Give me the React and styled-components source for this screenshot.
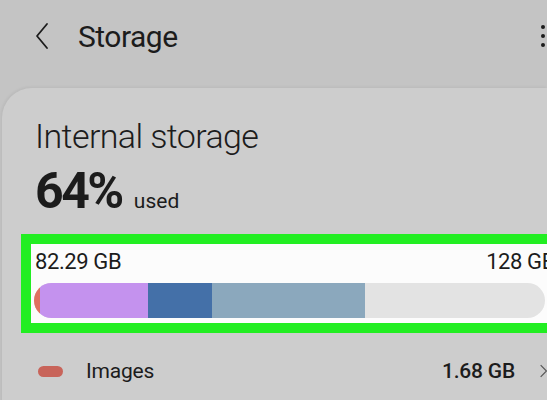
import React from "react";
import styled, { createGlobalStyle } from "styled-components";

const GlobalStyle = createGlobalStyle`
  html, body {
    margin: 0;
    padding: 0;
    background: #c4c4c4;
    overflow: hidden;
  }
  body {
    font-family: Roboto, "Liberation Sans", sans-serif;
    color: #1c1c1c;
  }
`;

const Screen = styled.div`
  width: 547px;
  height: 400px;
  overflow: hidden;
  background: #c4c4c4;
`;

const Header = styled.div`
  height: 88px;
  display: flex;
  align-items: flex-start;
  padding-top: 22px;
  box-sizing: border-box;
`;

const BackButton = styled.div`
  width: 44px;
  margin-left: 34px;
  display: flex;
`;

const Title = styled.h1`
  margin: 0;
  font-size: 30px;
  font-weight: 400;
  letter-spacing: -0.5px;
  line-height: 30px;
  flex: 1;
`;

const Kebab = styled.div`
  display: flex;
  flex-direction: column;
  gap: 5px;
  margin-right: 2px;
  margin-top: 3px;
  span {
    width: 4px;
    height: 4px;
    border-radius: 50%;
    background: #1c1c1c;
  }
`;

const Card = styled.div`
  margin-left: 2px;
  background: #cdcdcd;
  border-radius: 30px 0 0 0;
  box-shadow: -1px -1px 3px rgba(0, 0, 0, 0.06);
  height: 320px;
  padding-top: 29px;
  box-sizing: border-box;
`;

const CardTitle = styled.div`
  margin-left: 33px;
  font-size: 34px;
  font-weight: 300;
  letter-spacing: -0.6px;
  line-height: 38px;
`;

const Usage = styled.div`
  margin-left: 33px;
  margin-top: 11px;
  display: flex;
  align-items: baseline;
  gap: 12px;
`;

const Percent = styled.span`
  font-size: 50px;
  font-weight: 700;
  letter-spacing: -2.5px;
  line-height: 50px;
`;

const Used = styled.span`
  font-size: 21px;
  font-weight: 400;
`;

const Highlight = styled.div`
  margin-top: 18px;
  margin-left: 19px;
  width: 560px;
  border: 10px solid #22ee22;
  background: #fcfcfc;
  padding: 5px 0 5px 3px;
  box-sizing: border-box;
`;

const Labels = styled.div`
  display: flex;
  justify-content: space-between;
  width: 520px;
  font-size: 22px;
  line-height: 26px;
  padding-left: 1px;
  letter-spacing: -0.4px;
`;

const Bar = styled.div`
  margin-top: 8px;
  width: 511px;
  height: 35px;
  border-radius: 18px;
  overflow: hidden;
  display: flex;
  background: #e3e3e3;
`;

const Segment = styled.div`
  height: 100%;
  background: ${p => p.$color};
  flex-shrink: 0;
`;

const Row = styled.div`
  display: flex;
  align-items: center;
  margin-top: 26px;
  padding-left: 36px;
  height: 24px;
`;

const Dot = styled.span`
  width: 25px;
  height: 11px;
  border-radius: 6px;
  background: ${p => p.$color};
  margin-right: 23px;
`;

const RowLabel = styled.span`
  flex: 1;
  font-size: 21px;
  letter-spacing: -0.2px;
`;

const RowValue = styled.span`
  font-size: 21px;
  font-weight: 500;
  letter-spacing: -0.2px;
  margin-right: 24px;
`;

const Chevron = styled.span`
  display: flex;
  width: 10px;
  margin-right: -2px;
`;

const total = 511;
const segments = [
  { color: "#e07060", width: 6 },
  { color: "#c492ee", width: 108 },
  { color: "#4470a8", width: 64 },
  { color: "#8ba8bd", width: 153 },
];

export default function App() {
  return (
    <Screen>
      <GlobalStyle />
      <Header>
        <BackButton>
          <svg width="16" height="28" viewBox="0 0 16 28">
            <path d="M13 2 L3 14 L13 26" fill="none" stroke="#1c1c1c" strokeWidth="1.8" strokeLinecap="round" strokeLinejoin="round" />
          </svg>
        </BackButton>
        <Title>Storage</Title>
        <Kebab>
          <span />
          <span />
          <span />
        </Kebab>
      </Header>
      <Card>
        <CardTitle>Internal storage</CardTitle>
        <Usage>
          <Percent>64%</Percent>
          <Used>used</Used>
        </Usage>
        <Highlight>
          <Labels>
            <span>82.29 GB</span>
            <span>128 GB</span>
          </Labels>
          <Bar>
            {segments.map((s, i) => (
              <Segment key={i} $color={s.color} style={{ width: `${(s.width / total) * 100}%` }} />
            ))}
          </Bar>
        </Highlight>
        <Row>
          <Dot $color="#c8645a" />
          <RowLabel>Images</RowLabel>
          <RowValue>1.68 GB</RowValue>
          <Chevron>
            <svg width="12" height="18" viewBox="0 0 12 18">
              <path d="M2 2 L9 9 L2 16" fill="none" stroke="#555" strokeWidth="1.4" />
            </svg>
          </Chevron>
        </Row>
      </Card>
    </Screen>
  );
}
